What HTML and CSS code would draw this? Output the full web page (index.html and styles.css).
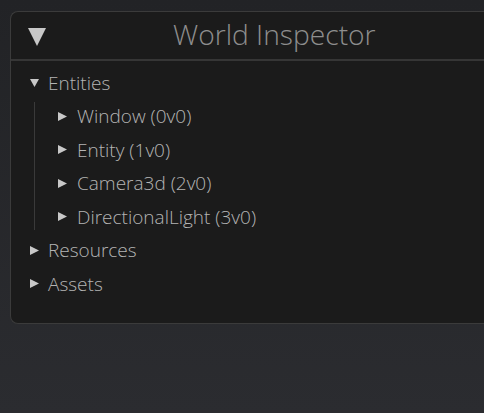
FILE: index.html
```html
<!DOCTYPE html>
<html>
<head>
<meta charset="utf-8">
<link rel="stylesheet" href="styles.css">
</head>
<body>
<div class="window">
  <div class="header">
    <svg class="collapse" width="18" height="18" viewBox="0 0 18 18"><polygon points="0,0 18,0 9,18" fill="#c8c8c8"/></svg>
    <div class="title">World Inspector</div>
  </div>
  <div class="content">
    <div class="row top"><svg class="tri" width="9" height="9" viewBox="0 0 9 9"><polygon points="0,1 9,1 4.5,9" fill="#c8c8c8"/></svg><span>Entities</span></div>
    <div class="children">
      <div class="row child"><svg class="tri" width="9" height="9" viewBox="0 0 9 9"><polygon points="0,0 9,4.5 0,9" fill="#c8c8c8"/></svg><span>Window (0v0)</span></div>
      <div class="row child"><svg class="tri" width="9" height="9" viewBox="0 0 9 9"><polygon points="0,0 9,4.5 0,9" fill="#c8c8c8"/></svg><span>Entity (1v0)</span></div>
      <div class="row child"><svg class="tri" width="9" height="9" viewBox="0 0 9 9"><polygon points="0,0 9,4.5 0,9" fill="#c8c8c8"/></svg><span>Camera3d (2v0)</span></div>
      <div class="row child"><svg class="tri" width="9" height="9" viewBox="0 0 9 9"><polygon points="0,0 9,4.5 0,9" fill="#c8c8c8"/></svg><span>DirectionalLight (3v0)</span></div>
    </div>
    <div class="row top"><svg class="tri" width="9" height="9" viewBox="0 0 9 9"><polygon points="0,0 9,4.5 0,9" fill="#c8c8c8"/></svg><span>Resources</span></div>
    <div class="row top"><svg class="tri" width="9" height="9" viewBox="0 0 9 9"><polygon points="0,0 9,4.5 0,9" fill="#c8c8c8"/></svg><span>Assets</span></div>
  </div>
</div>
</body>
</html>
```

FILE: styles.css
```css
html, body {
  margin: 0;
  padding: 0;
  height: 100%;
}
body {
  background: linear-gradient(180deg, #222326 0%, #2b2c30 100%);
  font-family: "Open Sans", "Noto Sans", sans-serif;
  font-weight: 300;
  overflow: hidden;
}
.window {
  margin: 11px 0 0 10px;
  width: calc(100% - 10px);
  height: 313px;
  box-sizing: border-box;
  background: #1b1b1b;
  border: 1px solid #3b3b3b;
  border-right: none;
  border-radius: 8px 0 0 8px;
}
.header {
  height: 47px;
  border-bottom: 2px solid #363636;
  display: flex;
  align-items: center;
  position: relative;
}
.collapse {
  margin-left: 17px;
  margin-top: 2px;
}
.title {
  position: absolute;
  left: 162px;
  top: 3px;
  font-size: 28.2px;
  color: #8e8e8e;
}
.content {
  padding-top: 5px;
}
.row {
  height: 33.5px;
  display: flex;
  align-items: center;
  font-size: 19px;
  color: #b4b4b4;
}
.row.top .tri {
  margin-left: 19px;
  margin-right: 9px;
}
.children {
  position: relative;
}
.children::before {
  content: "";
  position: absolute;
  left: 23px;
  top: 2px;
  bottom: 4px;
  border-left: 1px solid #3a3a3a;
}
.row.child .tri {
  margin-left: 47px;
  margin-right: 10px;
}
```
